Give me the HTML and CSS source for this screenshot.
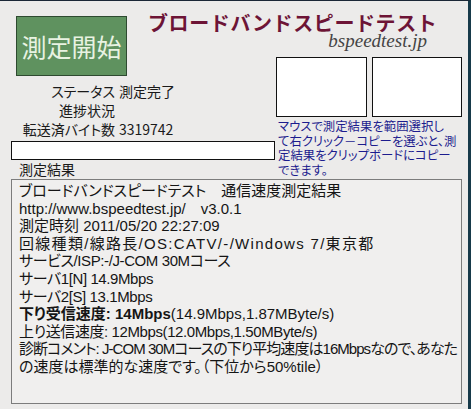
FILE: index.html
```html
<!DOCTYPE html>
<html lang="ja">
<head>
<meta charset="utf-8">
<title>ブロードバンドスピードテスト</title>
<link rel="stylesheet" href="styles.css">
</head>
<body>
<div class="app">
  <div class="top">
    <div class="start-btn">測定開始</div>
    <div class="brand">
      <div class="brand-title">ブロードバンドスピードテスト</div>
      <div class="brand-domain">bspeedtest.jp</div>
    </div>
    <div class="side">
      <div class="graphs">
        <div class="graph"></div>
        <div class="graph"></div>
      </div>
      <div class="note">マウスで測定結果を範囲選択し<br>て右クリック－コピーを選ぶと、測<br>定結果をクリップボードにコピー<br>できます。</div>
    </div>
    <div class="status">
      <div class="status-grid">
        <span class="label">ステータス</span><span class="value">測定完了</span>
        <span class="label">進捗状況</span><span class="value"></span>
        <span class="label">転送済バイト数</span><span class="value">3319742</span>
      </div>
      <div class="progress"></div>
      <div class="result-label">測定結果</div>
    </div>
  </div>
  <div class="result">
    <div class="line">ブロードバンドスピードテスト　通信速度測定結果</div>
    <div class="line">http://www.bspeedtest.jp/　v3.0.1</div>
    <div class="line">測定時刻 2011/05/20 22:27:09</div>
    <div class="line line-wide">回線種類/線路長/OS:CATV/-/Windows 7/東京都</div>
    <div class="line line-tight">サービス/ISP:-/J-COM 30Mコース</div>
    <div class="line line-tight">サーバ1[N] 14.9Mbps</div>
    <div class="line line-tight">サーバ2[S] 13.1Mbps</div>
    <div class="line"><b>下り受信速度: 14Mbps</b>(14.9Mbps,1.87MByte/s)</div>
    <div class="line line-tight">上り送信速度: 12Mbps(12.0Mbps,1.50MByte/s)</div>
    <div class="line line-tighter">診断コメント: J-COM 30Mコースの下り平均速度は16Mbpsなので、あなた</div>
    <div class="line">の速度は標準的な速度です。（下位から50%tile）</div>
  </div>
</div>
</body>
</html>
```

FILE: styles.css
```css
html, body {
  margin: 0;
  padding: 0;
  background: #ecebea;
}

body {
  font-family: "Noto Sans CJK JP", "Liberation Sans", sans-serif;
  font-feature-settings: "palt" 1;
  color: #1a1a1a;
}

.app {
  width: 471px;
  height: 409px;
  box-sizing: border-box;
  border-top: 1px solid #1b2736;
  border-right: 3px solid #173a4a;
  padding-left: 11px;
  overflow: hidden;
  background: #ecebea;
}

.top {
  display: grid;
  grid-template-columns: 137px 128px 192px;
  grid-template-rows: 56px 19px auto;
}

.start-btn {
  grid-column: 1;
  grid-row: 1 / 3;
  margin: 15px 0 0 5px;
  width: 111px;
  height: 60px;
  box-sizing: border-box;
  background: #5f925f;
  border: 1px solid #2e4a30;
  color: #e8f2e2;
  font-size: 25px;
  display: flex;
  align-items: center;
  justify-content: center;
}

.brand {
  grid-column: 2 / 4;
  grid-row: 1;
}

.brand-title {
  margin-top: 11px;
  font-size: 20px;
  line-height: 22px;
  font-weight: bold;
  color: #6d1436;
  letter-spacing: 0.6px;
  font-feature-settings: normal;
  white-space: nowrap;
}

.brand-domain {
  margin-top: -3px;
  font-family: "Liberation Serif", serif;
  font-style: italic;
  font-size: 19px;
  line-height: 19px;
  color: #444;
  text-align: right;
  padding-right: 41px;
}

.side {
  grid-column: 3;
  grid-row: 2 / 4;
}

.graphs {
  display: flex;
  gap: 5px;
}

.graph {
  width: 91px;
  height: 60px;
  box-sizing: border-box;
  background: #fff;
  border: 1px solid #111;
}

.graph + .graph {
  width: 90px;
}

.note {
  margin-top: 2px;
  padding-left: 2px;
  font-size: 12.4px;
  line-height: 14.5px;
  color: #1c1c8e;
  white-space: nowrap;
}

.status {
  grid-column: 1 / 3;
  grid-row: 3;
  font-size: 14px;
}

.status-grid {
  margin-top: 6px;
  display: grid;
  grid-template-columns: 104px auto;
  column-gap: 4px;
  line-height: 19px;
}

.status-grid .label {
  text-align: right;
  white-space: nowrap;
}

.progress {
  margin-top: 2px;
  width: 264px;
  height: 19px;
  box-sizing: border-box;
  background: #fff;
  border: 1px solid #111;
}

.result-label {
  padding-left: 8px;
  line-height: 19px;
}

.result {
  width: 451px;
  height: 225px;
  box-sizing: border-box;
  border: 1px solid #7c7c7c;
  background: #f0efee;
  padding: 2px 0 0 7px;
  font-family: "Liberation Sans", "Noto Sans CJK JP", sans-serif;
  font-size: 15px;
  line-height: 17.6px;
  color: #151515;
}

.result .line {
  white-space: nowrap;
}

.result .line-wide {
  letter-spacing: 1.3px;
}

.result .line-tight {
  letter-spacing: -0.4px;
}

.result .line-tighter {
  letter-spacing: -0.95px;
}

.result b {
  font-weight: bold;
}
```
